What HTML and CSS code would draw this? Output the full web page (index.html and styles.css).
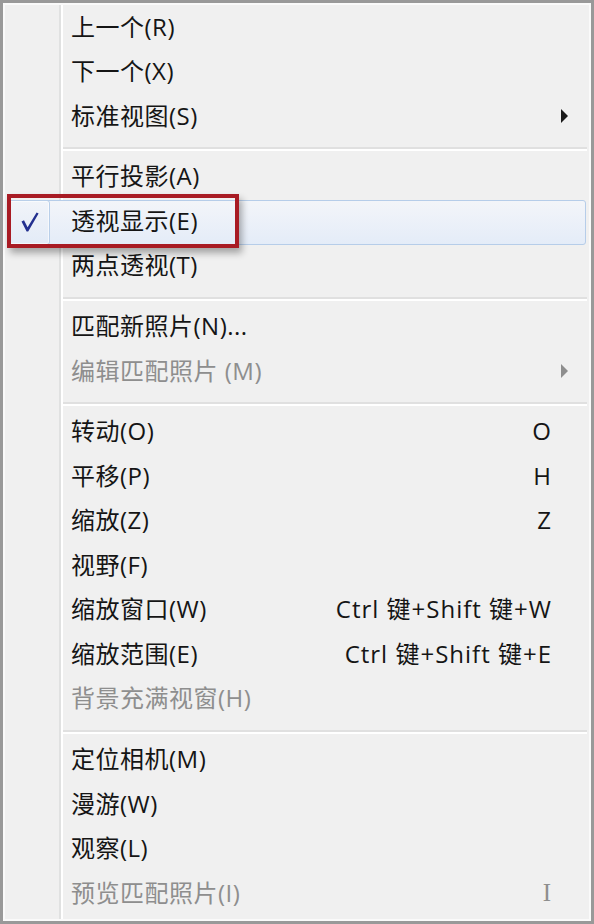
FILE: index.html
```html
<!DOCTYPE html>
<html lang="zh-CN">
<head>
<meta charset="utf-8">
<title>视图菜单</title>
<link rel="stylesheet" href="styles.css">
</head>
<body>
<div class="menu">
  <div class="item"><span class="gutter"></span><span class="label">上一个(R)</span></div>
  <div class="item"><span class="gutter"></span><span class="label">下一个(X)</span></div>
  <div class="item"><span class="gutter"></span><span class="label">标准视图(S)</span><span class="tail"><span class="arrow"></span></span></div>
  <div class="sep"><div class="line"></div></div>
  <div class="item"><span class="gutter"></span><span class="label">平行投影(A)</span></div>
  <div class="item hot"><span class="gutter"><span class="checkbox"><svg class="tick" width="18" height="20" viewBox="0 0 18 20"><path d="M0.5 9.5 L3 8.2 L6.6 15.2 L15.6 0.4 L17.6 1.6 L7.2 19.4 L5.6 19.4 Z" fill="#23308f"/></svg></span></span><span class="label">透视显示(E)</span></div>
  <div class="item"><span class="gutter"></span><span class="label">两点透视(T)</span></div>
  <div class="sep"><div class="line"></div></div>
  <div class="item"><span class="gutter"></span><span class="label">匹配新照片(N)...</span></div>
  <div class="item disabled"><span class="gutter"></span><span class="label">编辑匹配照片 (M)</span><span class="tail"><span class="arrow"></span></span></div>
  <div class="sep"><div class="line"></div></div>
  <div class="item"><span class="gutter"></span><span class="label">转动(O)</span><span class="key">O</span><span class="tail"></span></div>
  <div class="item"><span class="gutter"></span><span class="label">平移(P)</span><span class="key">H</span><span class="tail"></span></div>
  <div class="item"><span class="gutter"></span><span class="label">缩放(Z)</span><span class="key">Z</span><span class="tail"></span></div>
  <div class="item"><span class="gutter"></span><span class="label">视野(F)</span></div>
  <div class="item"><span class="gutter"></span><span class="label">缩放窗口(W)</span><span class="key">Ctrl 键+Shift 键+W</span><span class="tail"></span></div>
  <div class="item"><span class="gutter"></span><span class="label">缩放范围(E)</span><span class="key">Ctrl 键+Shift 键+E</span><span class="tail"></span></div>
  <div class="item disabled"><span class="gutter"></span><span class="label">背景充满视窗(H)</span></div>
  <div class="sep"><div class="line"></div></div>
  <div class="item"><span class="gutter"></span><span class="label">定位相机(M)</span></div>
  <div class="item"><span class="gutter"></span><span class="label">漫游(W)</span></div>
  <div class="item"><span class="gutter"></span><span class="label">观察(L)</span></div>
  <div class="item disabled"><span class="gutter"></span><span class="label">预览匹配照片(I)</span><span class="key serif">I</span><span class="tail"></span></div>
  <div class="annot"></div>
</div>
</body>
</html>
```

FILE: styles.css
```css
* { box-sizing: border-box; }
html, body { margin: 0; padding: 0; }
body {
  width: 594px;
  height: 924px;
  overflow: hidden;
  background: #f0f0f0;
  font-family: "Open Sans", "Noto Sans CJK SC", sans-serif;
}
.menu {
  position: relative;
  width: 594px;
  height: 924px;
  border: 3px solid #999999;
  padding: 3px;
  background-color: #f0f0f0;
  background-image: linear-gradient(to right,
    transparent 56px, #e0e1e1 56px, #e0e1e1 58px,
    #ffffff 58px, #ffffff 60px, transparent 60px);
  box-shadow: inset 0 0 0 2px #fafafa;
}
.item {
  display: flex;
  align-items: center;
  height: 44.5px;
  font-size: 24px;
  line-height: 1;
  color: #151515;
  white-space: nowrap;
}
.gutter {
  flex: none;
  width: 65px;
  height: 100%;
  display: flex;
  align-items: stretch;
}
.label { flex: 1; padding-bottom: 3px; letter-spacing: 0.5px; }
.key { flex: none; padding-bottom: 3px; letter-spacing: 1px; margin-right: -1px; }
.key.serif { font-family: "Liberation Serif", serif; font-size: 25px; }
.tail {
  flex: none;
  width: 37px;
  display: flex;
  align-items: center;
  padding-left: 10px;
  padding-bottom: 2px;
}
.arrow {
  width: 0;
  height: 0;
  border-left: 7px solid #1a1a1a;
  border-top: 7px solid transparent;
  border-bottom: 7px solid transparent;
}
.disabled { color: #8e8e8e; }
.disabled .arrow { border-left-color: #8e8e8e; }
.hot {
  margin: 0 2px;
  border: 1px solid #b6cde9;
  border-radius: 3px;
  background: linear-gradient(#f3f5f9, #e4ecf8);
}
.hot .gutter { width: 62px; }
.checkbox {
  width: 42px;
  margin: -1px 0 -1px -1px;
  border: 1px solid #b9cfe9;
  border-radius: 3px;
  background: linear-gradient(#f1f4f9, #e3ebf7);
  display: flex;
  align-items: center;
  justify-content: center;
  box-shadow: inset 0 0 0 1px rgba(255,255,255,0.6);
}
.tick { display: block; margin-left: 1px; }
.sep {
  height: 16.2px;
  padding-top: 7.5px;
  margin: 0 1px 0 57px;
}
.line {
  border-top: 2px solid #e0e0e0;
  border-bottom: 2px solid #ffffff;
}
.annot {
  position: absolute;
  left: 4px;
  top: 191px;
  width: 232px;
  height: 54px;
  border: 4px solid #a81b24;
  box-shadow: 3px 5px 7px rgba(0,0,0,0.32);
}
```
